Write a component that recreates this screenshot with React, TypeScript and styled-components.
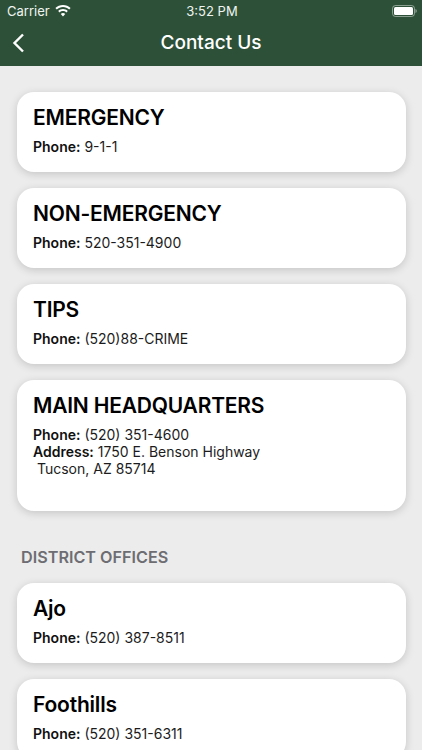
import React from "react";
import styled, { createGlobalStyle } from "styled-components";

const Global = createGlobalStyle`
  html, body { margin: 0; padding: 0; height: 100%; overflow: hidden; background: #ececec; }
  #root { height: 750px; overflow: hidden; }
  * { box-sizing: border-box; }
`;
const Page = styled.div`
  width: 422px; height: 750px; overflow: hidden; background: #ececec;
  font-family: Inter, "Liberation Sans", sans-serif; color: #000;
`;
const Header = styled.header`background: #2d5138; height: 66px; color: #fff;`;
const StatusBar = styled.div`
  height: 21px; display: grid; grid-template-columns: 1fr auto 1fr; align-items: center;
  padding: 0 5px 0 7px; font: 400 13px Inter, sans-serif; color: #f0f4f0;
`;
const Carrier = styled.div`display: flex; align-items: center; gap: 5px;`;
const Battery = styled.div`justify-self: end; display: flex; align-items: center;`;
const NavBar = styled.div`
  height: 43px; display: grid; grid-template-columns: 50px 1fr 50px; align-items: center;
`;
const Title = styled.h1`margin: 0; text-align: center; font: 500 19px Inter, sans-serif;`;
const Content = styled.main`display: flex; flex-direction: column; gap: 16px; padding: 26px 16.500px 0;`;
const Card = styled.section<{ $h: number }>`
  height: ${p => p.$h}px; background: #fff; border-radius: 17px; padding: 13px 16.500px;
  box-shadow: 0 2px 8px rgba(0,0,0,.17);
`;
const Name = styled.h2`margin: 0 0 7px; font: 600 21px/26px Inter, sans-serif; letter-spacing: -0.2px;`;
const Line = styled.div`font: 400 14px/17px Inter, sans-serif; color: #1c1c1c; white-space: pre;`;
const Label = styled.b`font-weight: 600; color: #111;`;
const Section = styled.h3`
  margin: 20px 0 0 4.500px; height: 20px; font: 600 16.200px/20px Inter, sans-serif; color: #6d6d72;
`;

const Wifi = () => (
  <svg width="16" height="12" viewBox="0 0 16 12"><path fill="#fff" d="M8 0c2.900 0 5.600 1.100 7.600 3L14.200 4.500C12.500 3 10.400 2.100 8 2.100S3.500 3 1.800 4.500L.4 3C2.400 1.100 5.100 0 8 0zm0 4c1.800 0 3.500.7 4.800 1.900l-1.400 1.500C10.500 6.600 9.300 6.100 8 6.100s-2.500.5-3.400 1.300L3.200 5.900C4.500 4.700 6.200 4 8 4zm0 4c.9 0 1.600.3 2.200.9L8 11.500 5.800 8.900C6.400 8.300 7.100 8 8 8z"/></svg>
);
const Back = () => (
  <svg width="14" height="20" viewBox="0 0 14 20" style={{ marginLeft: 12 }}><path d="M11 1.500 2.500 10l8.500 8.500" fill="none" stroke="#fff" strokeWidth="2.400"/></svg>
);
const Bat = () => (
  <svg width="25" height="12" viewBox="0 0 25 12"><rect x=".5" y=".5" width="22" height="11" rx="3" fill="none" stroke="#fff" opacity=".45"/><rect x="2" y="2" width="19" height="8" rx="1.500" fill="#fff"/><path d="M23.500 4v4c.7-.3 1.200-1.100 1.200-2s-.5-1.700-1.200-2z" fill="#fff" opacity=".5"/></svg>
);

const data = [
  { h: 80, n: "EMERGENCY", l: [["Phone:", " 9-1-1"]] },
  { h: 80, n: "NON-EMERGENCY", l: [["Phone:", " 520-351-4900"]] },
  { h: 80, n: "TIPS", l: [["Phone:", " (520)88-CRIME"]] },
  { h: 131, n: "MAIN HEADQUARTERS", l: [["Phone:", " (520) 351-4600"], ["Address:", " 1750 E. Benson Highway"], ["", " Tucson, AZ 85714"]] },
];
const offices = [
  { h: 80, n: "Ajo", l: [["Phone:", " (520) 387-8511"]] },
  { h: 80, n: "Foothills", l: [["Phone:", " (520) 351-6311"]] },
];
const render = (c: typeof data[number]) => (
  <Card key={c.n} $h={c.h}>
    <Name>{c.n}</Name>
    {c.l.map((x, i) => <Line key={i}><Label>{x[0]}</Label>{x[1]}</Line>)}
  </Card>
);

export default function App() {
  return (
    <Page>
      <Global />
      <Header>
        <StatusBar>
          <Carrier>Carrier <Wifi /></Carrier>
          <span>3:52 PM</span>
          <Battery><Bat /></Battery>
        </StatusBar>
        <NavBar><Back /><Title>Contact Us</Title><span /></NavBar>
      </Header>
      <Content>
        {data.map(render)}
        <Section>DISTRICT OFFICES</Section>
        {offices.map(render)}
      </Content>
    </Page>
  );
}
